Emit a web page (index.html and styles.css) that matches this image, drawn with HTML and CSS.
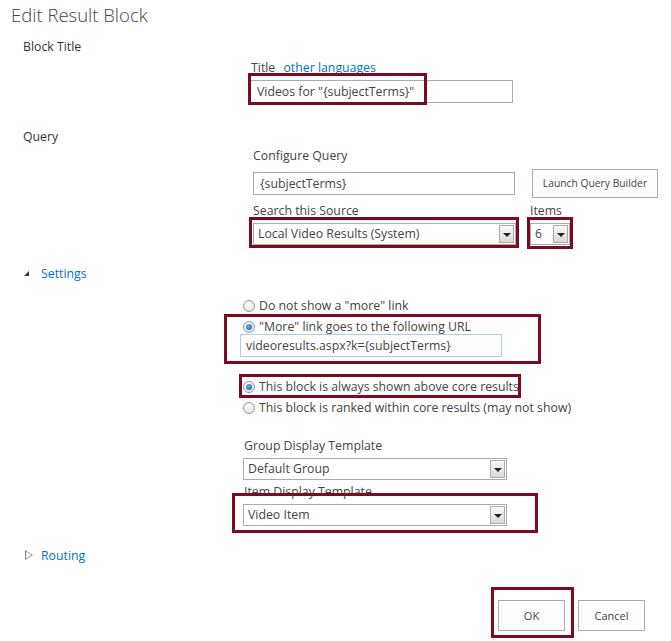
FILE: index.html
```html
<!DOCTYPE html>
<html lang="en">
<head>
  <meta charset="UTF-8">
  <title>Edit Result Block</title>
  <link rel="stylesheet" href="styles.css">
</head>
<body>
  <div class="page">
    <h1>Edit Result Block</h1>

    <div class="section">
      <div class="section-title">Block Title</div>
      <div class="block-body">
        <div class="field-label">Title <a href="#" class="link">other languages</a></div>
        <div class="text-box title-box">Videos for "{subjectTerms}"</div>
      </div>
    </div>

    <div class="section">
      <div class="section-title">Query</div>
      <div class="query-body">
        <div class="field-label">Configure Query</div>
        <div class="query-row">
          <div class="text-box query-box">{subjectTerms}</div>
          <div class="btn builder-btn">Launch Query Builder</div>
        </div>
        <div class="source-row">
          <div class="source-col">
            <div class="field-label">Search this Source</div>
            <div class="select source-select"><span>Local Video Results (System)</span><i class="arrow"></i></div>
          </div>
          <div class="items-col">
            <div class="field-label">Items</div>
            <div class="select items-select"><span>6</span><i class="arrow"></i></div>
          </div>
        </div>
      </div>
    </div>

    <div class="toggle expanded"><i class="tri"></i><a href="#" class="link">Settings</a></div>

    <div class="settings-body">
      <div class="radio-row"><i class="radio"></i>Do not show a "more" link</div>
      <div class="radio-row"><i class="radio checked"></i>"More" link goes to the following URL</div>
      <div class="text-box url-box">videoresults.aspx?k={subjectTerms}</div>

      <div class="radio-row gap"><i class="radio checked"></i>This block is always shown above core results</div>
      <div class="radio-row"><i class="radio"></i>This block is ranked within core results (may not show)</div>

      <div class="field-label template-label">Group Display Template</div>
      <div class="select template-select"><span>Default Group</span><i class="arrow"></i></div>
      <div class="field-label item-label">Item Display Template</div>
      <div class="select template-select"><span>Video Item</span><i class="arrow"></i></div>
    </div>

    <div class="toggle collapsed"><i class="tri"></i><a href="#" class="link">Routing</a></div>

    <div class="actions">
      <div class="btn action-btn">OK</div>
      <div class="btn action-btn">Cancel</div>
    </div>

    <!-- highlight frames drawn over the form -->
    <div class="mark" style="left:248px;top:73px;width:179px;height:32px"></div>
    <div class="mark" style="left:249px;top:217px;width:270px;height:31px"></div>
    <div class="mark" style="left:527px;top:217px;width:46px;height:32px"></div>
    <div class="mark" style="left:224px;top:314px;width:317px;height:50px"></div>
    <div class="mark" style="left:239px;top:374px;width:282px;height:24px"></div>
    <div class="mark" style="left:232px;top:493px;width:306px;height:40px"></div>
    <div class="mark" style="left:491px;top:587px;width:83px;height:51px"></div>
  </div>
</body>
</html>
```

FILE: styles.css
```css
* {
  margin: 0;
  padding: 0;
  box-sizing: border-box;
}

body {
  font-family: "Open Sans", "Noto Sans", sans-serif;
  font-size: 12.3px;
  color: #444;
  background: #fff;
}

.page {
  position: relative;
  width: 671px;
  height: 641px;
  overflow: hidden;
}

h1 {
  font-size: 18.5px;
  font-weight: 300;
  line-height: 28px;
  color: #444;
  padding-left: 11px;
  padding-top: 1px;
}

.link {
  color: #0072c6;
  text-decoration: none;
}

.field-label {
  line-height: 16px;
  color: #444;
}

.section-title {
  line-height: 16px;
  padding-left: 23px;
  color: #333;
}

/* Block Title */
.section:first-of-type .section-title {
  margin-top: 10px;
}

.block-body {
  padding-left: 251px;
  margin-top: 5px;
}

.block-body .link {
  margin-left: 5px;
}

.text-box {
  height: 23px;
  border: 1px solid #ababab;
  padding: 0 6px;
  line-height: 21px;
  color: #444;
  background: #fff;
  white-space: nowrap;
}

.title-box {
  width: 263px;
  margin-top: 4px;
  margin-left: -1px;
}

/* Query */
.section + .section .section-title {
  margin-top: 26px;
}

.query-body {
  padding-left: 253px;
  margin-top: 3px;
}

.query-row {
  display: flex;
  align-items: center;
  gap: 17px;
  margin-top: 5px;
}

.query-box {
  width: 262px;
}

.btn {
  border: 1px solid #ababab;
  background: #fdfdfd;
  color: #444;
  text-align: center;
  font-size: 11px;
}

.builder-btn {
  width: 126px;
  height: 29px;
  line-height: 27px;
  font-size: 10.3px;
}

.source-row {
  display: flex;
  gap: 14px;
  margin-top: 5px;
}

.source-col .field-label,
.items-col .field-label {
  margin-bottom: 4px;
}

.select {
  display: flex;
  align-items: center;
  height: 22px;
  border: 1px solid #ababab;
  background: #fff;
  padding-left: 4px;
  padding-right: 1px;
}

.select span {
  flex: 1;
  white-space: nowrap;
  line-height: 20px;
}

.arrow {
  position: relative;
  width: 15px;
  height: 18px;
  border: 1px solid #ababab;
  background: linear-gradient(#fafafa, #d9d9d9);
}

.arrow::after {
  content: "";
  position: absolute;
  left: 3px;
  top: 7px;
  border-left: 4px solid transparent;
  border-right: 4px solid transparent;
  border-top: 4px solid #222;
}

.source-select {
  width: 263px;
}

.items-select {
  width: 40px;
}

/* collapsible headers */
.toggle {
  display: flex;
  align-items: center;
  line-height: 16px;
  padding-left: 23px;
}

.toggle.expanded {
  margin-top: 21px;
}

.toggle.collapsed {
  margin-top: 22px;
}

.tri {
  position: relative;
  width: 18px;
  height: 16px;
}

.expanded .tri::after {
  content: "";
  position: absolute;
  left: 1px;
  top: 5px;
  border-left: 5px solid transparent;
  border-bottom: 5px solid #333;
}

.collapsed .tri::after {
  content: "";
  position: absolute;
  left: 2px;
  top: 2px;
  width: 8px;
  height: 10px;
  background: #888;
  clip-path: polygon(0 0, 100% 50%, 0 100%, 0 0, 15% 15%, 15% 85%, 82% 50%, 15% 15%);
}

/* settings block */
.settings-body {
  padding-left: 243px;
  margin-top: 16px;
}

.radio-row {
  display: flex;
  align-items: center;
  line-height: 16px;
  margin-bottom: 5px;
  white-space: nowrap;
}

.radio-row.gap {
  margin-top: 22px;
}

.radio {
  position: relative;
  width: 12px;
  height: 12px;
  border-radius: 50%;
  border: 1px solid #9a9a9a;
  background: radial-gradient(circle at 40% 35%, #fff, #dcdcdc);
  margin-right: 4px;
}

.radio.checked::after {
  content: "";
  position: absolute;
  left: 2px;
  top: 2px;
  width: 6px;
  height: 6px;
  border-radius: 50%;
  background: radial-gradient(circle at 40% 35%, #6fb4f0, #0b4f9c);
}

.url-box {
  width: 262px;
  margin-left: -3px;
  margin-top: -6px;
  border-color: #a9cff0;
  padding-left: 5px;
}

.template-label {
  margin-top: 22px;
  margin-left: 1px;
}

.template-select {
  width: 264px;
  margin-top: 4px;
}

.item-label {
  margin-top: 4px;
  margin-left: 1px;
}

/* bottom buttons */
.actions {
  display: flex;
  justify-content: flex-end;
  gap: 13px;
  padding-right: 26px;
  margin-top: 36px;
}

.action-btn {
  width: 67px;
  height: 31px;
  line-height: 29px;
}

/* dark red frames */
.mark {
  position: absolute;
  border: 3px solid #7d0a1e;
}
```
